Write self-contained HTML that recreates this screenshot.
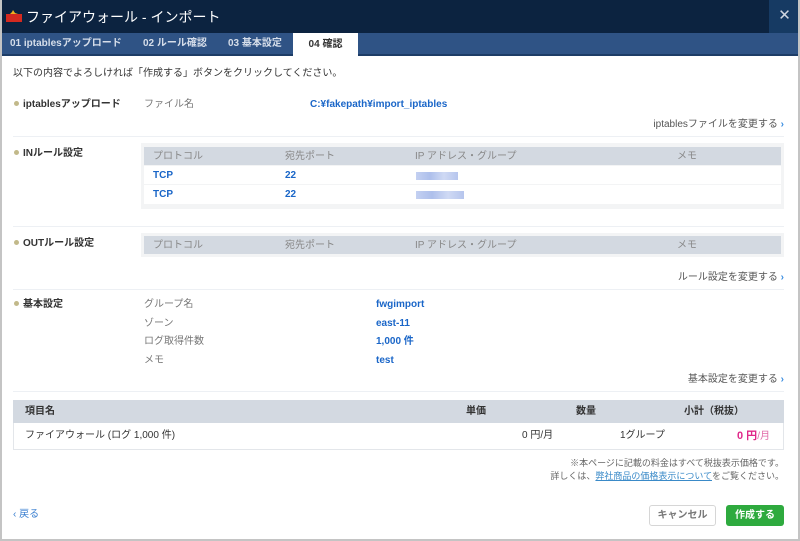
<!DOCTYPE html>
<html><head><meta charset="utf-8"><style>
*{margin:0;padding:0;box-sizing:border-box}
body{width:800px;height:541px;overflow:hidden;background:#fff;font-family:"Liberation Sans","Noto Sans CJK JP",sans-serif;font-size:10px;color:#333;position:relative}
.a{position:absolute;white-space:nowrap;line-height:16px}
.frame{position:absolute;left:0;top:0;width:800px;height:541px;border:2px solid #c4c4c4;border-top:none}
.b{color:#1a66c8;font-weight:bold}
.g{color:#777}
.hd{font-weight:bold;color:#333}
.dot{display:inline-block;width:5px;height:5px;border-radius:50%;background:#c2b98a;margin-right:4px;vertical-align:1px}
.sep{position:absolute;left:13px;width:771px;height:1px;background:#edf0f4}
.lnk{color:#555}
.lnk:after{content:" ›";color:#3a8de0;font-weight:bold}
.blur{position:absolute;height:8px;background:linear-gradient(90deg,#b9c8ef,#9fb4e8,#c7d3f2,#a9bbea);opacity:.85}
</style></head><body>
<div class="a" style="left:0;top:0;width:800px;height:33px;background:#0c2340"></div>
<div class="a" style="left:769px;top:0;width:31px;height:33px;background:#163a63;color:#cfd6e0;font-size:15px;text-align:center;line-height:32px">✕</div>
<svg class="a" style="left:5px;top:8px" width="18" height="16"><path d="M8 2 L10 5 L13 6 L5 6 L7 4Z" fill="#f0b020"/><rect x="1" y="6" width="16" height="8" fill="#d42a20"/></svg>
<div class="a" style="left:26px;top:8px;color:#fff;font-size:14px;line-height:18px">ファイアウォール - インポート</div>
<div class="a" style="left:0;top:33px;width:800px;height:23px;background:#2f5385;border-bottom:2px solid #1d3c66"></div>
<div class="a" style="left:10px;top:36px;color:#d6deea;font-size:10px;font-weight:bold">01 iptablesアップロード</div>
<div class="a" style="left:143px;top:36px;color:#d6deea;font-size:10px;font-weight:bold">02 ルール確認</div>
<div class="a" style="left:228px;top:36px;color:#d6deea;font-size:10px;font-weight:bold">03 基本設定</div>
<div class="a" style="left:293px;top:33px;width:65px;height:24px;background:#fff;color:#333;font-weight:bold;text-align:center;line-height:24px">04 確認</div>

<div class="a" style="left:13px;top:66px">以下の内容でよろしければ「作成する」ボタンをクリックしてください。</div>

<div class="a hd" style="left:14px;top:97px"><span class="dot"></span>iptablesアップロード</div>
<div class="a g" style="left:144px;top:97px">ファイル名</div>
<div class="a b" style="left:310px;top:97px">C:¥fakepath¥import_iptables</div>
<div class="a lnk" style="right:16px;top:117px">iptablesファイルを変更する</div>
<div class="sep" style="top:136px"></div>

<div class="a hd" style="left:14px;top:146px"><span class="dot"></span>INルール設定</div>
<div class="a" style="left:141px;top:143px;width:643px;height:66px;background:#f3f4f5"></div>
<div class="a" style="left:144px;top:147px;width:637px;height:18px;background:#d3d9e1"></div>
<div class="a" style="left:144px;top:166px;width:637px;height:18px;background:#fff"></div>
<div class="a" style="left:144px;top:185px;width:637px;height:19px;background:#fff"></div>
<div class="a g" style="left:153px;top:149px;color:#888">プロトコル</div>
<div class="a g" style="left:285px;top:149px;color:#888">宛先ポート</div>
<div class="a g" style="left:415px;top:149px;color:#888">IP アドレス・グループ</div>
<div class="a g" style="left:677px;top:149px;color:#888">メモ</div>
<div class="a b" style="left:153px;top:168px">TCP</div><div class="a b" style="left:285px;top:168px">22</div>
<div class="blur" style="left:416px;top:172px;width:42px"></div>
<div class="a b" style="left:153px;top:187px">TCP</div><div class="a b" style="left:285px;top:187px">22</div>
<div class="blur" style="left:416px;top:191px;width:48px"></div>
<div class="sep" style="top:226px"></div>

<div class="a hd" style="left:14px;top:236px"><span class="dot"></span>OUTルール設定</div>
<div class="a" style="left:141px;top:233px;width:643px;height:24px;background:#f3f4f5"></div>
<div class="a" style="left:144px;top:236px;width:637px;height:18px;background:#d3d9e1"></div>
<div class="a g" style="left:153px;top:238px;color:#888">プロトコル</div>
<div class="a g" style="left:285px;top:238px;color:#888">宛先ポート</div>
<div class="a g" style="left:415px;top:238px;color:#888">IP アドレス・グループ</div>
<div class="a g" style="left:677px;top:238px;color:#888">メモ</div>
<div class="a lnk" style="right:16px;top:270px">ルール設定を変更する</div>
<div class="sep" style="top:289px"></div>

<div class="a hd" style="left:14px;top:297px"><span class="dot"></span>基本設定</div>
<div class="a g" style="left:144px;top:297px">グループ名</div><div class="a b" style="left:376px;top:297px">fwgimport</div>
<div class="a g" style="left:144px;top:316px">ゾーン</div><div class="a b" style="left:376px;top:316px">east-11</div>
<div class="a g" style="left:144px;top:334px">ログ取得件数</div><div class="a b" style="left:376px;top:334px">1,000 件</div>
<div class="a g" style="left:144px;top:353px">メモ</div><div class="a b" style="left:376px;top:353px">test</div>
<div class="a lnk" style="right:16px;top:372px">基本設定を変更する</div>
<div class="sep" style="top:391px"></div>

<div class="a" style="left:13px;top:400px;width:771px;height:50px;border:1px solid #e3e6ea"></div>
<div class="a" style="left:13px;top:400px;width:771px;height:23px;background:#d3d9e1"></div>
<div class="a hd" style="left:25px;top:404px">項目名</div>
<div class="a hd" style="left:466px;top:404px">単価</div>
<div class="a hd" style="left:576px;top:404px">数量</div>
<div class="a hd" style="left:684px;top:404px">小計（税抜）</div>
<div class="a" style="left:25px;top:428px">ファイアウォール (ログ 1,000 件)</div>
<div class="a" style="left:522px;top:428px">0 円/月</div>
<div class="a" style="left:620px;top:428px">1グループ</div>
<div class="a" style="left:737px;top:428px;color:#e0288a;font-weight:bold;font-size:11px">0 円<span style="font-weight:normal;font-size:10px;color:#e06aa8">/月</span></div>
<div class="a" style="right:16px;top:455px;color:#666;font-size:9px">※本ページに記載の料金はすべて税抜表示価格です。</div>
<div class="a" style="right:16px;top:468px;color:#666;font-size:9px">詳しくは、<span style="color:#3a8ac8;text-decoration:underline">弊社商品の価格表示について</span>をご覧ください。</div>

<div class="a" style="left:13px;top:507px;color:#3a7fd0">‹ 戻る</div>
<div class="a" style="left:649px;top:505px;width:67px;height:21px;border:1px solid #d6d6d6;border-radius:3px;color:#777;text-align:center;line-height:19px;font-weight:bold">キャンセル</div>
<div class="a" style="left:726px;top:505px;width:58px;height:21px;background:#2eaa3e;border-radius:3px;color:#fff;text-align:center;line-height:21px;font-weight:bold">作成する</div>
<div class="frame"></div>
</body></html>
